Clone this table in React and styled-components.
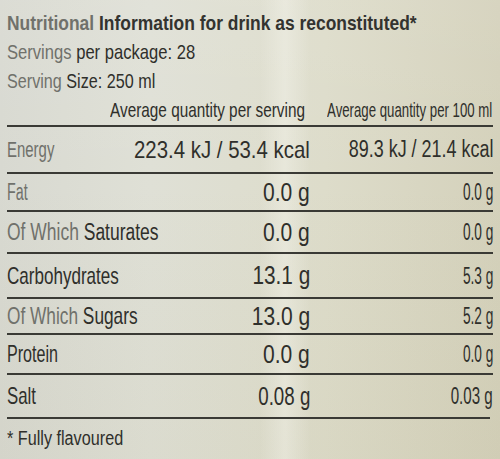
import styled, { createGlobalStyle } from 'styled-components';

const Global = createGlobalStyle`
*, *::before, *::after {
    box-sizing: border-box;
}
html, body {
    margin: 0;
    padding: 0;
}
body {
    width: 500px;
    height: 459px;
    overflow: hidden;
    font-family: "Liberation Sans", Arial, sans-serif;
}
`;

const rows = [
    { name: ['Energy', ''], serving: '223.4 kJ / 53.4 kcal', per100: '89.3 kJ / 21.4 kcal', h: 47, nf: 22, nx: 0.68, sf: 24, sx: 0.85, pf: 23, px: 0.78 },
    { name: ['Fat', ''], serving: '0.0 g', per100: '0.0 g', h: 38, nf: 23, nx: 0.62, sf: 26, sx: 0.81, pf: 24, px: 0.57 },
    { name: ['Of Which', ' Saturates'], serving: '0.0 g', per100: '0.0 g', h: 42, nf: 23, nx: 0.76, sf: 26, sx: 0.81, pf: 24, px: 0.57 },
    { name: ['', 'Carbohydrates'], serving: '13.1 g', per100: '5.3 g', h: 45, nf: 24, nx: 0.71, sf: 26, sx: 0.8, pf: 24, px: 0.57 },
    { name: ['Of Which', ' Sugars'], serving: '13.0 g', per100: '5.2 g', h: 36, nf: 24, nx: 0.72, sf: 26, sx: 0.81, pf: 24, px: 0.57 },
    { name: ['', 'Protein'], serving: '0.0 g', per100: '0.0 g', h: 40, nf: 24, nx: 0.67, sf: 26, sx: 0.81, pf: 24, px: 0.57 },
    { name: ['', 'Salt'], serving: '0.08 g', per100: '0.03 g', h: 44, nf: 24, nx: 0.7, sf: 26, sx: 0.72, pf: 24, px: 0.63 },
];

const App = () => {
    return (
        <Label>
            <Global />
            <Title>
                <Squeeze $sx={0.83}><Faded>Nutritional</Faded> Information for drink as reconstituted*</Squeeze>
            </Title>
            <Info>
                <Squeeze $sx={0.79}><Faded>Servings</Faded> per package: 28</Squeeze>
            </Info>
            <Info>
                <Squeeze $sx={0.77}><Faded>Serving</Faded> Size: 250 ml</Squeeze>
            </Info>
            <Head>
                <span />
                <Cell><Squeeze $sx={0.73} $right>Average quantity per serving</Squeeze></Cell>
                <Cell><Squeeze $sx={0.63} $right>Average quantity per 100 ml</Squeeze></Cell>
            </Head>
            {rows.map((r) => (
                <Row key={r.name.join('')} $h={r.h}>
                    <Name $size={r.nf}>
                        <Squeeze $sx={r.nx}>
                            <Faded>{r.name[0]}</Faded>
                            {r.name[1]}
                        </Squeeze>
                    </Name>
                    <Cell $size={r.sf}><Squeeze $sx={r.sx} $right>{r.serving}</Squeeze></Cell>
                    <Cell $size={r.pf}><Squeeze $sx={r.px} $right>{r.per100}</Squeeze></Cell>
                </Row>
            ))}
            <Foot>
                <Squeeze $sx={0.81}>* Fully flavoured</Squeeze>
            </Foot>
        </Label>
    );
};

export default App;

const Label = styled.div`
width: 500px;
height: 459px;
padding: 9px 7px 0 7px;
color: #2f2f2b;
background:
    linear-gradient(90deg, rgba(255,255,250,0) 52%, rgba(255,255,250,0.3) 57%, rgba(255,255,250,0) 62%),
    linear-gradient(180deg, rgba(255,255,255,0.08) 0%, rgba(0,0,0,0) 40%, rgba(150,140,90,0.06) 100%),
    linear-gradient(90deg, #d8d9d1 0%, #dfe0d6 30%, #dddcca 65%, #d4d1bb 100%);
`;

const Squeeze = styled.span`
display: inline-block;
flex: none;
white-space: nowrap;
transform: scaleX(${p => p.$sx});
transform-origin: ${p => (p.$right ? 'right' : 'left')} center;
`;

const Faded = styled.span`
color: #70716b;
`;

const Title = styled.div`
font-weight: bold;
font-size: 21px;
line-height: 28px;
height: 28px;
white-space: nowrap;
color: #33332f;
`;

const Info = styled.div`
font-size: 21px;
line-height: 29px;
height: 29px;
white-space: nowrap;
`;

const Head = styled.div`
display: grid;
grid-template-columns: 100px 198px 1fr;
padding-right: 1px;
height: 30px;
align-items: center;
font-size: 21px;
`;

const Cell = styled.div`
display: flex;
justify-content: flex-end;
min-width: 0;
font-size: ${p => p.$size || 21}px;
`;

const Row = styled.div`
display: grid;
grid-template-columns: 100px 203px 1fr;
height: ${p => p.$h}px;
align-items: center;
border-top: 2px solid #3a3a35;
`;

const Name = styled.div`
min-width: 0;
font-size: ${p => p.$size}px;
`;

const Foot = styled.div`
border-top: 2px solid #3a3a35;
margin-right: 3px;
padding-top: 8px;
font-size: 20px;
`;
